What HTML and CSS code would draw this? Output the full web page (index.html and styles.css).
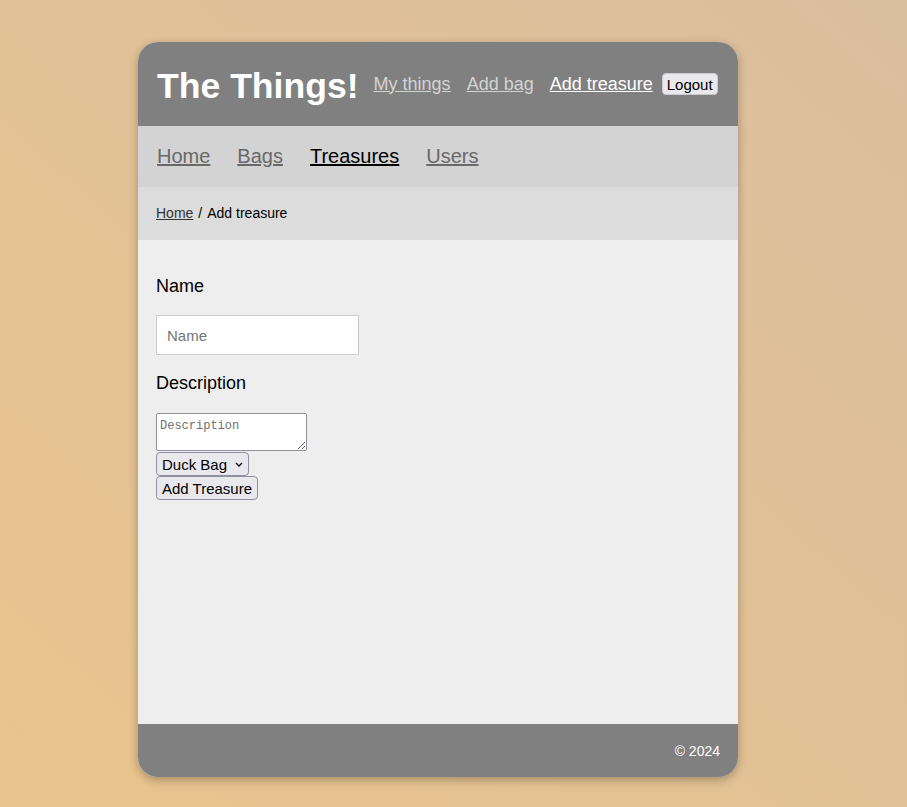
FILE: index.html
```html
<!DOCTYPE html>
<html lang="en">
<head>
<meta charset="utf-8">
<title>The Things!</title>
<link rel="stylesheet" href="styles.css">
</head>
<body>
<div class="card">
  <header class="topbar">
    <h1 class="brand">The Things!</h1>
    <nav class="user-links">
      <a href="#" class="ulink">My things</a>
      <a href="#" class="ulink">Add bag</a>
      <a href="#" class="ulink active">Add treasure</a>
      <button class="logout" type="button">Logout</button>
    </nav>
  </header>
  <nav class="mainnav">
    <a href="#" class="nlink">Home</a>
    <a href="#" class="nlink">Bags</a>
    <a href="#" class="nlink active">Treasures</a>
    <a href="#" class="nlink">Users</a>
  </nav>
  <div class="crumbs">
    <a href="#" class="crumb-link">Home</a><span class="sep">/</span><span class="crumb-current">Add treasure</span>
  </div>
  <main class="content">
    <form class="form">
      <label class="lbl" for="name">Name</label>
      <input class="text-in" id="name" type="text" placeholder="Name">
      <label class="lbl" for="desc">Description</label>
      <textarea class="area" id="desc" placeholder="Description"></textarea>
      <select class="sel">
        <option>Duck Bag</option>
      </select>
      <button class="btn" type="button">Add Treasure</button>
    </form>
  </main>
  <footer class="foot">© 2024</footer>
</div>
</body>
</html>
```

FILE: styles.css
```css
html, body {
  margin: 0;
  height: 100%;
}
body {
  font-family: "Liberation Sans", Arial, sans-serif;
  background: linear-gradient(to top right, #e9c48c 0%, #e2c196 50%, #dabf9f 100%);
  padding: 42px 0 0 138px;
  box-sizing: border-box;
}
.card {
  width: 600px;
  height: 735px;
  border-radius: 20px;
  overflow: hidden;
  display: flex;
  flex-direction: column;
  box-shadow: 0 3px 10px rgba(0, 0, 0, 0.28);
  background: #eeeeee;
}
.topbar {
  background: #808080;
  height: 84px;
  flex: none;
  display: flex;
  align-items: center;
  padding: 0 19px;
  white-space: nowrap;
}
.brand {
  flex: none;
  margin: 0;
  font-size: 35.6px;
  font-weight: bold;
  color: #ffffff;
  line-height: 1;
  padding-top: 5px;
}
.user-links {
  flex: none;
  display: flex;
  align-items: center;
  margin-left: 15px;
}
.ulink {
  font-size: 18px;
  color: #d3d3d3;
  margin-right: 16px;
}
.ulink.active {
  color: #ffffff;
  margin-right: 9px;
}
.logout {
  font-family: "Liberation Sans", Arial, sans-serif;
  font-size: 15px;
  height: 22px;
  padding: 0 4px;
  background: #e9e9ed;
  color: #000;
  border: 1px solid #c9c9d0;
  border-radius: 4px;
}
.mainnav {
  background: #d3d3d3;
  height: 61px;
  flex: none;
  display: flex;
  align-items: center;
  padding: 0 19px;
  gap: 27px;
  box-sizing: border-box;
}
.nlink {
  font-size: 20px;
  color: #696969;
}
.nlink.active {
  color: #000000;
}
.crumbs {
  background: #dcdcdc;
  height: 53px;
  flex: none;
  display: flex;
  align-items: center;
  padding: 0 18px 2px;
  box-sizing: border-box;
  font-size: 14px;
  color: #000;
}
.crumb-link {
  color: #333333;
}
.sep {
  margin: 0 5px;
}
.content {
  flex: 1;
  padding: 18px;
}
.form {
  display: flex;
  flex-direction: column;
  align-items: flex-start;
}
.lbl {
  display: block;
  font-size: 18px;
  line-height: 22px;
  margin: 17px 0 18px;
  color: #000;
}
.text-in {
  width: 203px;
  height: 40px;
  box-sizing: border-box;
  border: 1px solid #cccccc;
  padding: 0 10px;
  font-family: "Liberation Sans", Arial, sans-serif;
  font-size: 15px;
  background: #ffffff;
  margin: 0;
}
.text-in::placeholder {
  color: #757575;
}
.area {
  width: 151px;
  height: 38px;
  box-sizing: border-box;
  border: 1px solid #8f8f9d;
  border-radius: 2px;
  padding: 5px 3px 2px;
  font-family: "Liberation Mono", monospace;
  font-size: 12px;
  background: #ffffff;
  margin: 1px 0 1px;
  resize: both;
}
.area::placeholder {
  color: #6f6f6f;
}
.sel {
  appearance: none;
  -webkit-appearance: none;
  width: 93px;
  height: 24px;
  box-sizing: border-box;
  border: 1px solid #8f8f9d;
  border-radius: 4px;
  background: #e9e9ed url("data:image/svg+xml;utf8,<svg xmlns='http://www.w3.org/2000/svg' width='8' height='5' viewBox='0 0 8 5'><path d='M1 1l3 3 3-3' fill='none' stroke='black' stroke-width='1.3'/></svg>") no-repeat right 5px center;
  padding: 0 20px 0 5px;
  font-family: "Liberation Sans", Arial, sans-serif;
  font-size: 15px;
  color: #000;
  margin: 0;
}
.btn {
  height: 24px;
  box-sizing: border-box;
  border: 1px solid #8f8f9d;
  border-radius: 4px;
  background: #e9e9ed;
  padding: 0 5px;
  font-family: "Liberation Sans", Arial, sans-serif;
  font-size: 15px;
  color: #000;
  margin: 0;
}
.foot {
  background: #808080;
  height: 53px;
  flex: none;
  display: flex;
  align-items: center;
  justify-content: flex-end;
  padding: 0 18px;
  font-size: 14px;
  color: #ffffff;
}
```
